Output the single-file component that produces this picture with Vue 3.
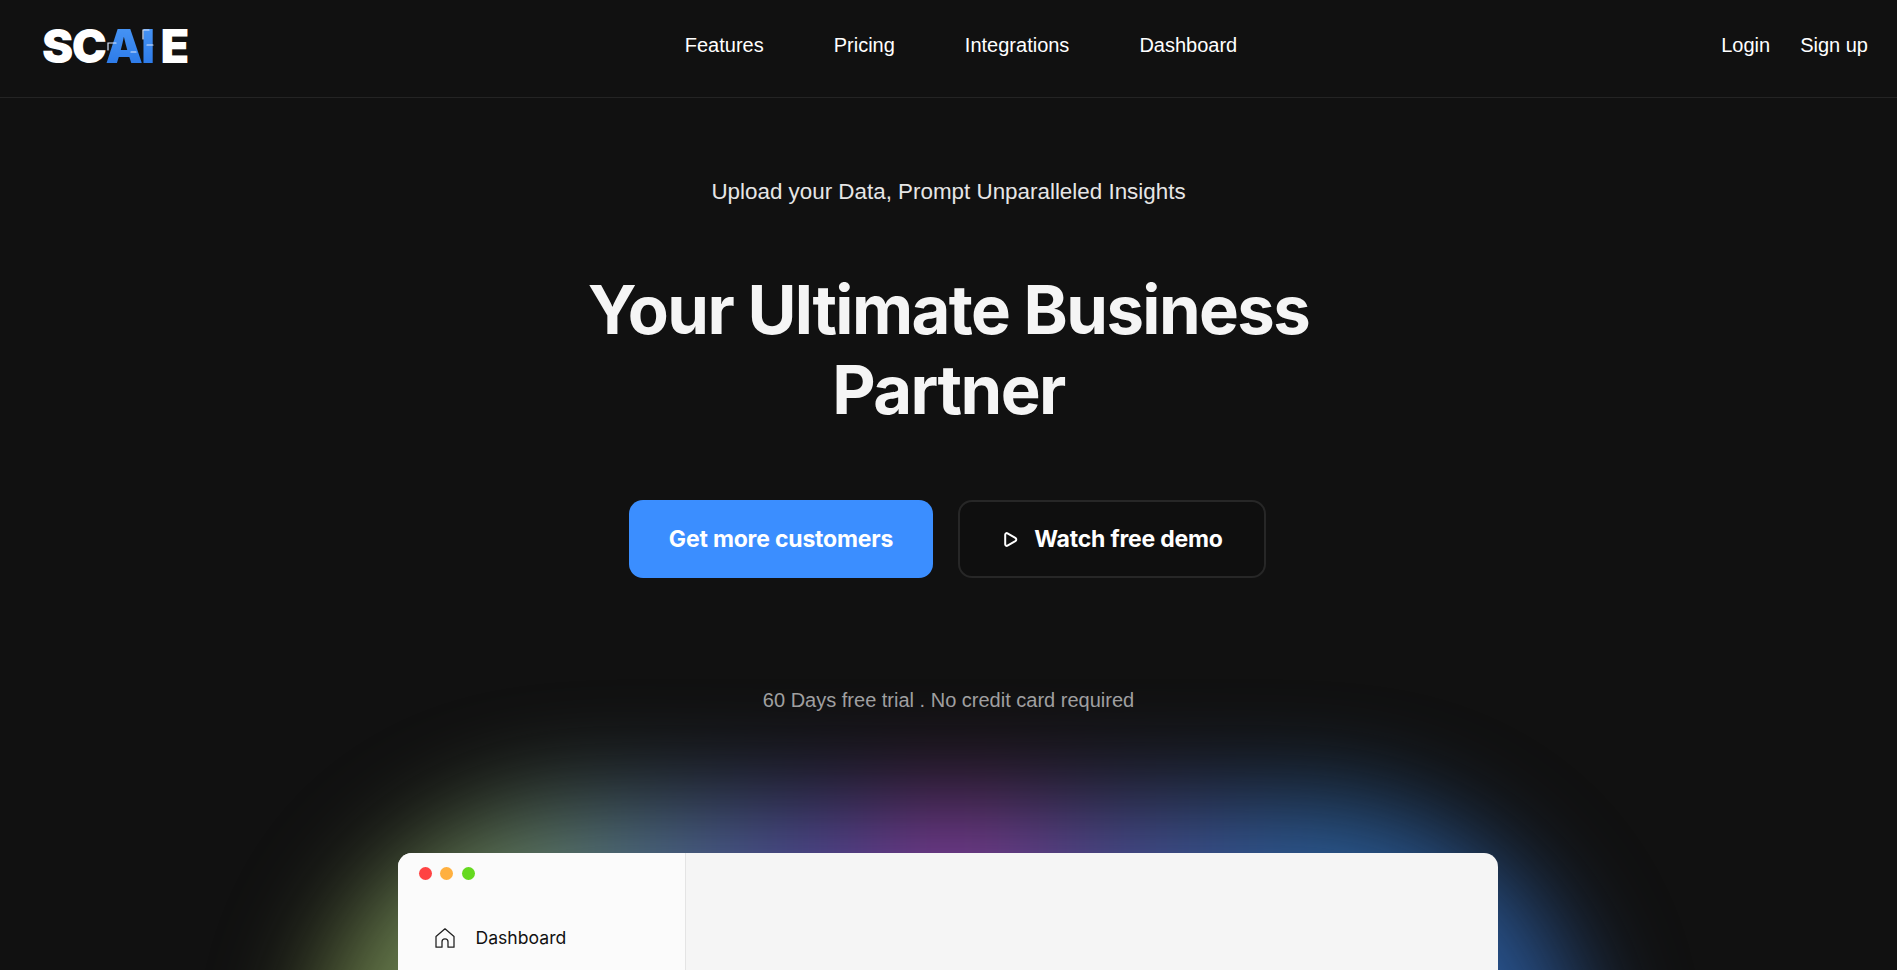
<template>
  <div class="page">
    <header class="topbar">
      <a class="logo" href="#">
        <span>SC</span><span class="logo-ai">AI<svg class="logo-circuit" viewBox="0 0 50 30" width="50" height="30" aria-hidden="true">
          <path d="M3 23v-7h8M38 12V3h6M42 18h6M26 25h5" fill="none" stroke="#dbe8ff" stroke-width="1.200" stroke-linecap="round" />
        </svg></span><span class="logo-e">E</span>
      </a>
      <nav class="main-nav">
        <a v-for="item in navItems" :key="item" href="#">{{ item }}</a>
      </nav>
      <div class="auth">
        <a href="#">Login</a>
        <a href="#">Sign up</a>
      </div>
    </header>

    <main class="hero">
      <p class="tagline">Upload your Data, Prompt Unparalleled Insights</p>
      <h1>Your Ultimate Business<br />Partner</h1>
      <div class="actions">
        <button class="btn btn-primary">Get more customers</button>
        <button class="btn btn-ghost">
          <svg viewBox="0 0 14 15" width="14" height="15" aria-hidden="true">
            <path d="M1.200 2.700c0-1.300 1.300-2 2.300-1.400l7.800 4.500c1.300.8 1.300 2.600 0 3.400l-7.800 4.500c-1 .6-2.300-.1-2.300-1.400z" fill="none" stroke="#fff" stroke-width="2" stroke-linejoin="round" />
          </svg>
          Watch free demo
        </button>
      </div>
      <p class="trial">60 Days free trial . No credit card required</p>

      <div class="preview-wrap">
        <div class="glow"></div>
        <div class="preview">
          <aside class="sidebar">
            <div class="dots">
              <i class="red"></i><i class="amber"></i><i class="lime"></i>
            </div>
            <div class="side-item">
              <svg viewBox="0 0 20 20" width="20" height="20" aria-hidden="true">
                <path d="M1 8.500 10 .8l9 7.700v10.700h-6v-5.400a3 3 0 0 0-6 0v5.400H1z" fill="none" stroke="#222" stroke-width="1.300" stroke-linejoin="round" />
              </svg>
              <span>Dashboard</span>
            </div>
          </aside>
          <div class="content"></div>
        </div>
      </div>
    </main>
  </div>
</template>

<script setup>
const navItems = ['Features', 'Pricing', 'Integrations', 'Dashboard']
</script>

<style>
html,
body {
  margin: 0;
  background: #111;
  overflow: hidden;
}
</style>

<style scoped>
.page {
  height: 970px;
  background: #111;
  color: #fff;
  font-family: "Liberation Sans", Arial, sans-serif;
  overflow: hidden;
}

.topbar {
  height: 98px;
  box-sizing: border-box;
  border-bottom: 1px solid #242424;
  display: grid;
  grid-template-columns: 1fr auto 1fr;
  align-items: center;
  padding: 0 29px 7px 42px;
}

.topbar a {
  color: #fff;
  text-decoration: none;
}

.logo {
  display: flex;
  align-items: center;
  font-family: Inter, sans-serif;
  font-weight: 900;
  font-size: 47px;
  line-height: 1;
  letter-spacing: -1.500px;
}

.logo-ai {
  position: relative;
  background: linear-gradient(#4a97f5, #2a78e8);
  -webkit-background-clip: text;
  background-clip: text;
  color: transparent;
}

.logo-circuit {
  position: absolute;
  left: 0;
  top: 5px;
}

.logo-e {
  margin-left: 7px;
}

.main-nav {
  display: flex;
  gap: 70px;
  font-size: 20px;
  margin-left: 12px;
}

.auth {
  display: flex;
  justify-content: flex-end;
  gap: 30px;
  font-size: 20px;
}

.hero {
  display: flex;
  flex-direction: column;
  align-items: center;
}

.tagline {
  margin: 81px 0 0;
  font-size: 22.400px;
  line-height: 26px;
  color: #e6e6e6;
}

h1 {
  margin: 65px 0 0;
  font-family: Inter, sans-serif;
  font-weight: 700;
  font-size: 67px;
  line-height: 80px;
  letter-spacing: -1.600px;
  text-align: center;
  color: #f5f5f5;
}

.actions {
  display: flex;
  gap: 25px;
  margin: 70px 2px 0 0;
}

.btn {
  height: 78px;
  box-sizing: border-box;
  border-radius: 14px;
  font-family: Inter, sans-serif;
  font-weight: 700;
  font-size: 23px;
  letter-spacing: -0.200px;
  color: #fff;
  display: flex;
  align-items: center;
  justify-content: center;
}

.btn-primary {
  width: 304px;
  border: 0;
  background: #3b8eff;
}

.btn-ghost {
  width: 308px;
  gap: 16px;
  padding: 0 0 0 3px;
  background: #0f0f0f;
  border: 2px solid #272727;
}

.trial {
  margin: 110px 0 0;
  font-size: 20px;
  line-height: 24px;
  color: #a1a1a1;
}

.preview-wrap {
  position: relative;
  width: 1100px;
  margin: 141px 2px 0 0;
}

.glow {
  position: absolute;
  left: -88px;
  top: -54px;
  width: 1280px;
  height: 420px;
  border-radius: 280px 280px 0 0;
  background: linear-gradient(90deg, #6b7a3e 0, #66805c 15%, #4a6a88 27%, #4a4590 40%, #80388f 50%, #4a4a8c 62%, #2a5c95 78%, #28508e 100%);
  filter: blur(50px);
}

.preview {
  position: relative;
  height: 300px;
  display: flex;
  background: #f5f5f5;
  border-radius: 14px 14px 0 0;
  overflow: hidden;
}

.sidebar {
  width: 288px;
  box-sizing: border-box;
  background: #fbfbfb;
  border-right: 1px solid #e4e4e4;
  padding: 14px 21px 0;
}

.dots {
  display: flex;
  gap: 8.500px;
}

.dots i {
  width: 13px;
  height: 13px;
  border-radius: 50%;
}

.red { background: #ff4343; }
.amber { background: #ffb03f; }
.lime { background: #65d91f; }

.side-item {
  display: flex;
  align-items: center;
  gap: 21px;
  margin: 47px 0 0 16px;
  font-family: Inter, sans-serif;
  font-size: 17.600px;
  color: #111;
}

.content {
  flex: 1;
}
</style>
